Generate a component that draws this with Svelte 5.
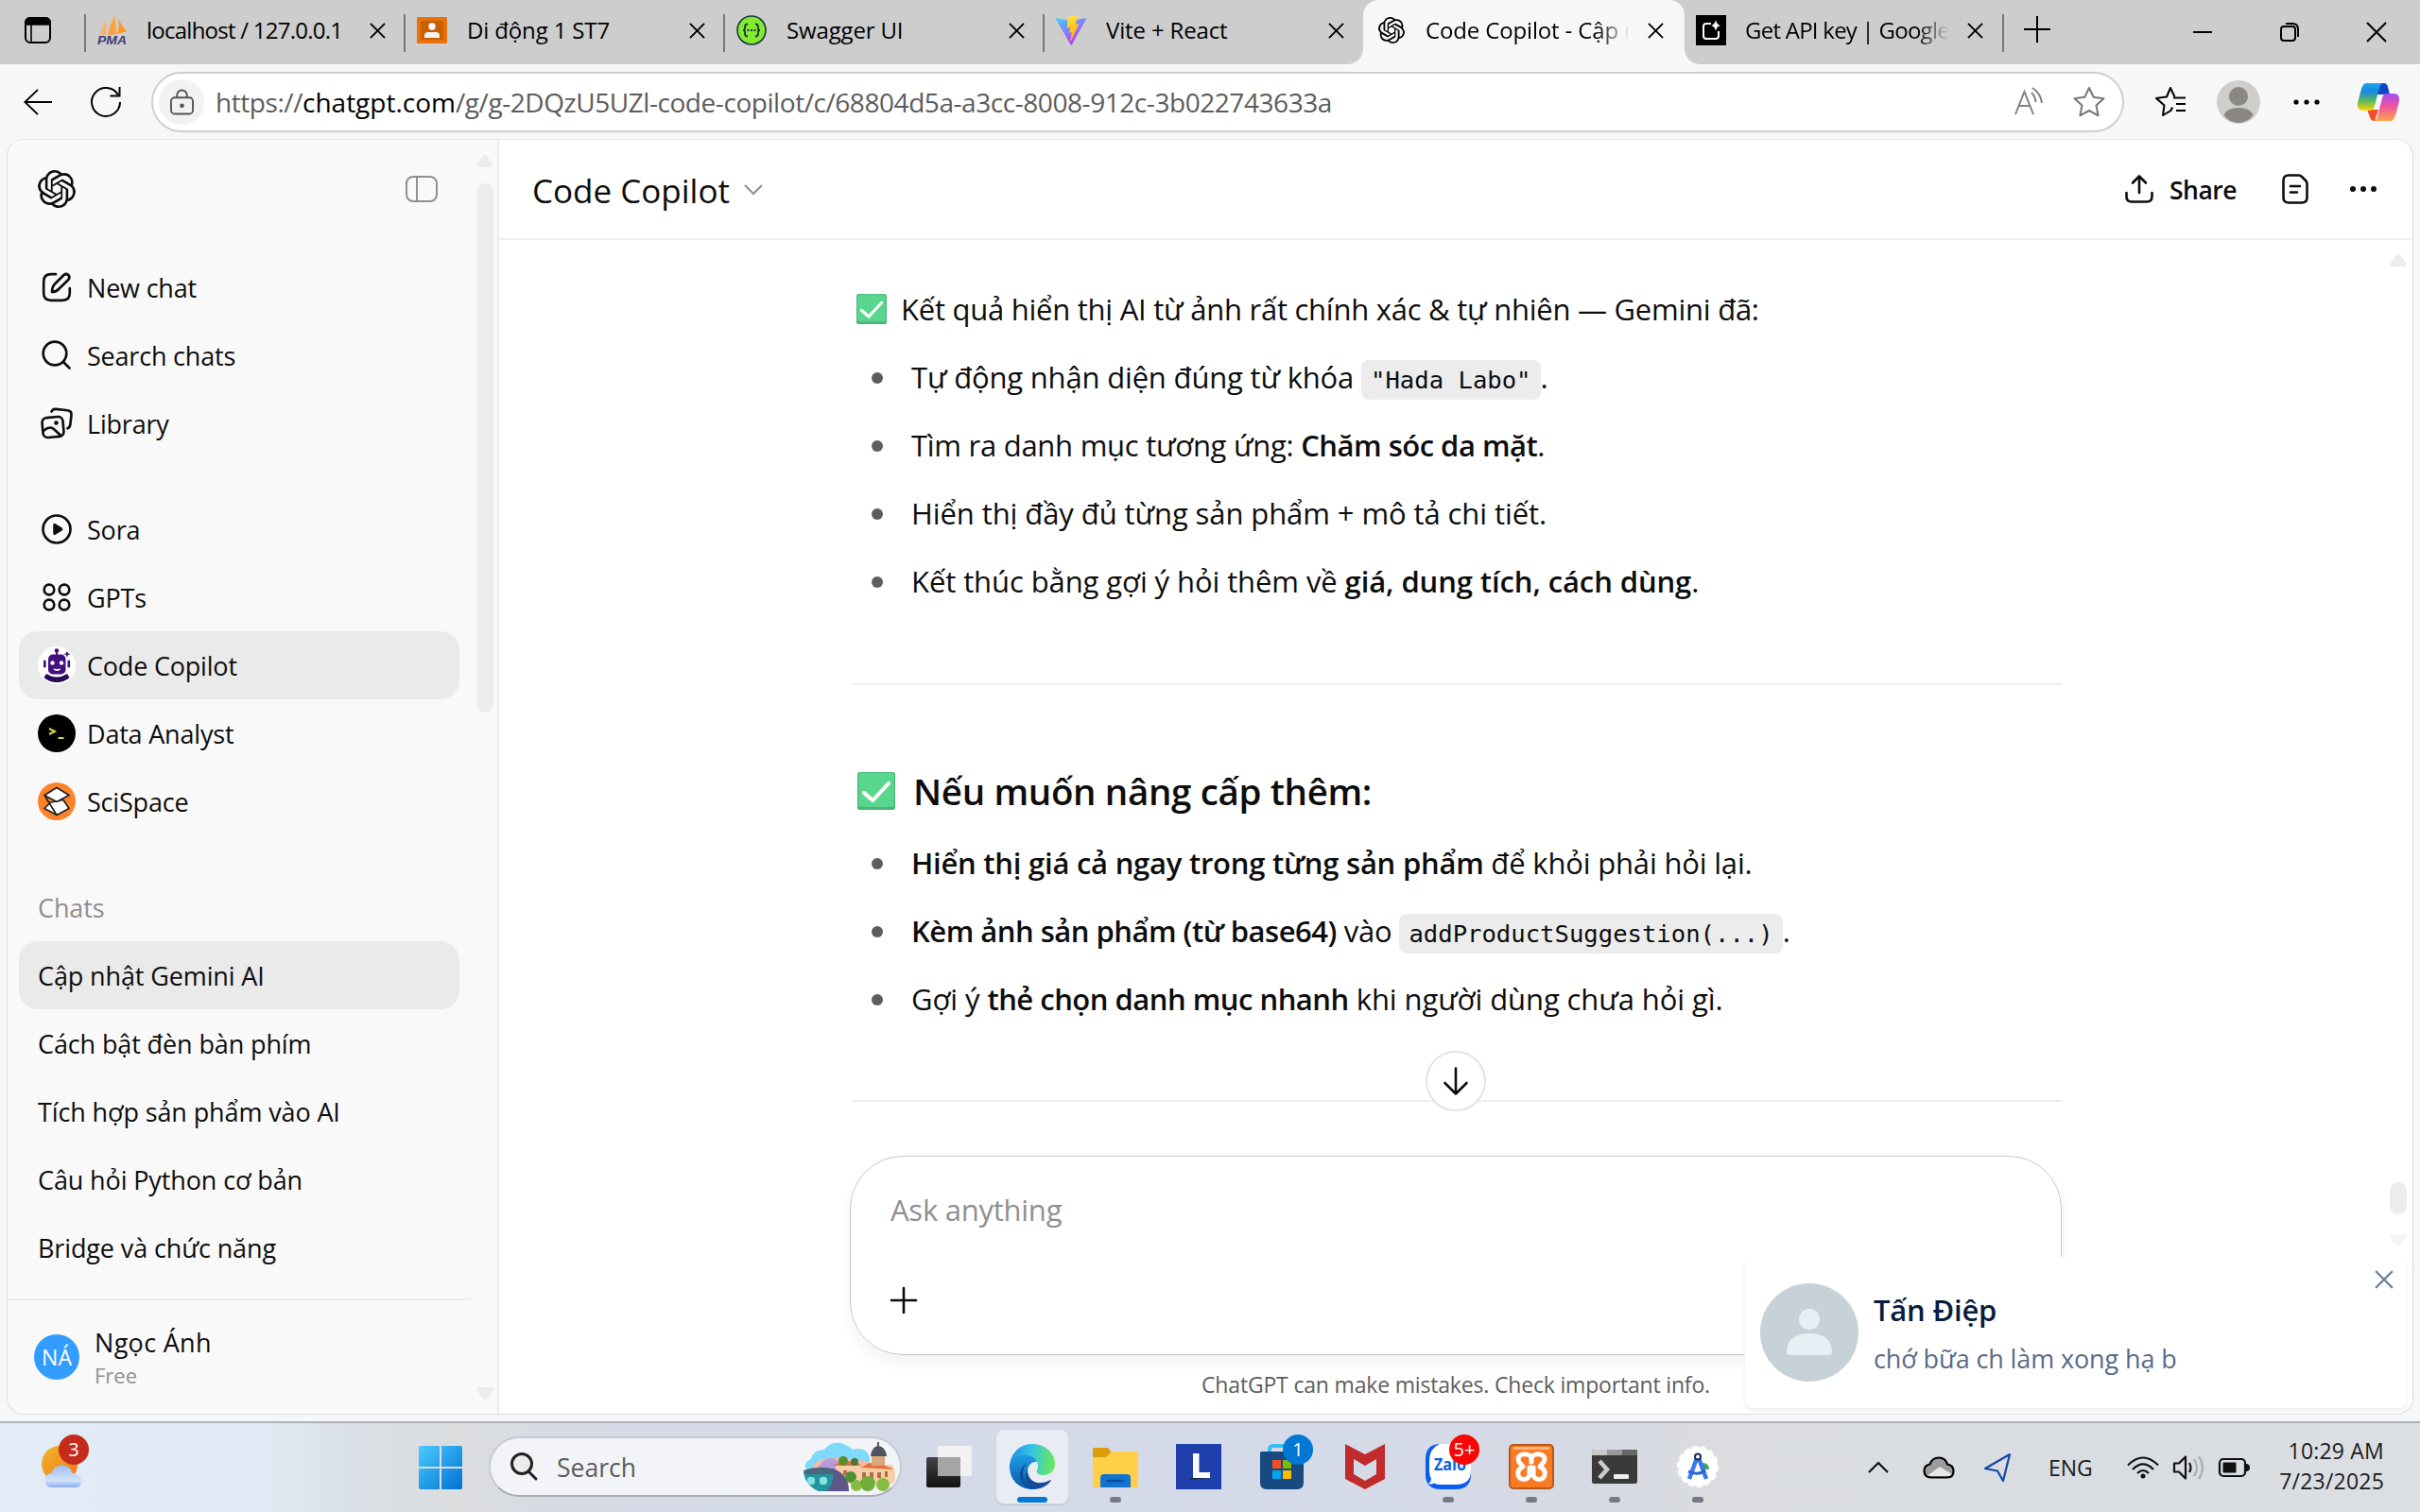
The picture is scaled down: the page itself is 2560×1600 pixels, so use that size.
<script>
  const tabs = [
    { icon: 'pma', title: 'localhost / 127.0.0.1', dense: true },
    { icon: 'class', title: 'Di động 1 ST7' },
    { icon: 'swagger', title: 'Swagger UI' },
    { icon: 'vite', title: 'Vite + React' },
    { icon: 'openai', title: 'Code Copilot - Cập nhật Gemini', active: true, faded: true },
    { icon: 'studio', title: 'Get API key | Google AI Studio', faded: true, dense: true },
  ];
  const tools = [
    { icon: 'edit', label: 'New chat' },
    { icon: 'search', label: 'Search chats' },
    { icon: 'library', label: 'Library' },
  ];
  const gpts = [
    { icon: 'sora', label: 'Sora' },
    { icon: 'gpts', label: 'GPTs' },
    { icon: 'robot', label: 'Code Copilot', active: true },
    { icon: 'analyst', label: 'Data Analyst' },
    { icon: 'scispace', label: 'SciSpace' },
  ];
  const chats = [
    'Cập nhật Gemini AI',
    'Cách bật đèn bàn phím',
    'Tích hợp sản phẩm vào AI',
    'Câu hỏi Python cơ bản',
    'Bridge và chức năng',
  ];
  const apps = [
    { icon: 'taskview' },
    { icon: 'edge', active: true },
    { icon: 'folder', running: true },
    { icon: 'lapp' },
    { icon: 'store', badge: '1' },
    { icon: 'mcafee' },
    { icon: 'zalo', running: true, badge: '5+', alert: true },
    { icon: 'xampp', running: true },
    { icon: 'terminal', running: true },
    { icon: 'android', running: true },
  ];
</script>

{#snippet openai()}
  <svg viewBox="0 0 24 24" fill="currentColor"><path d="M22.2819 9.8211a5.9847 5.9847 0 0 0-.5157-4.9108 6.0462 6.0462 0 0 0-6.5098-2.9A6.0651 6.0651 0 0 0 4.9807 4.1818a5.9847 5.9847 0 0 0-3.9977 2.9 6.0462 6.0462 0 0 0 .7427 7.0966 5.98 5.98 0 0 0 .511 4.9107 6.051 6.051 0 0 0 6.5146 2.9001A5.9847 5.9847 0 0 0 13.2599 24a6.0557 6.0557 0 0 0 5.7718-4.2058 5.9894 5.9894 0 0 0 3.9977-2.9001 6.0557 6.0557 0 0 0-.7475-7.0729zm-9.022 12.6081a4.4755 4.4755 0 0 1-2.8764-1.0408l.1419-.0804 4.7783-2.7582a.7948.7948 0 0 0 .3927-.6813v-6.7369l2.02 1.1686a.071.071 0 0 1 .038.052v5.5826a4.504 4.504 0 0 1-4.4945 4.4944zm-9.6607-4.1254a4.4708 4.4708 0 0 1-.5346-3.0137l.142.0852 4.783 2.7582a.7712.7712 0 0 0 .7806 0l5.8428-3.3685v2.3324a.0804.0804 0 0 1-.0332.0615L9.74 19.9502a4.4992 4.4992 0 0 1-6.1408-1.6464zM2.3408 7.8956a4.485 4.485 0 0 1 2.3655-1.9728V11.6a.7664.7664 0 0 0 .3879.6765l5.8144 3.3543-2.0201 1.1685a.0757.0757 0 0 1-.071 0l-4.8303-2.7865A4.504 4.504 0 0 1 2.3408 7.872zm16.5963 3.8558L13.1038 8.364 15.1192 7.2a.0757.0757 0 0 1 .071 0l4.8303 2.7913a4.4944 4.4944 0 0 1-.6765 8.1042v-5.6772a.79.79 0 0 0-.407-.667zm2.0107-3.0231l-.142-.0852-4.7735-2.7818a.7759.7759 0 0 0-.7854 0L9.409 9.2297V6.8974a.0662.0662 0 0 1 .0284-.0615l4.8303-2.7866a4.4992 4.4992 0 0 1 6.6802 4.66zM8.3065 12.863l-2.02-1.1638a.0804.0804 0 0 1-.038-.0567V6.0742a4.4992 4.4992 0 0 1 7.3757-3.4537l-.142.0805L8.704 5.459a.7948.7948 0 0 0-.3927.6813zm1.0976-2.3654l2.602-1.4998 2.6069 1.4998v2.9994l-2.5974 1.4997-2.6067-1.4997Z" /></svg>
{/snippet}

{#snippet cross()}
  <svg viewBox="0 0 18 18" fill="none" stroke="currentColor" stroke-width="2"><path d="M1 1l16 16M17 1L1 17" /></svg>
{/snippet}

{#snippet check()}
  <svg viewBox="0 0 32 32">
    <rect width="32" height="32" rx="2" fill="#4bb47b" />
    <rect x="1" y="0.5" width="30" height="29" rx="2" fill="#58d68d" />
    <path d="M5.500 17.500l7.500 6.500L26.500 9.500" fill="none" stroke="#fff" stroke-width="3.200" stroke-linecap="round" stroke-linejoin="round" />
  </svg>
{/snippet}

{#snippet favicon(name)}
  {#if name === 'pma'}
    <svg viewBox="0 0 32 32">
      <path d="M9 3Q10 12 9 21L2 20Q7 12 9 3z" fill="#fbb36b" />
      <path d="M19 0Q12 12 11 21L21 20Q18 9 19 0z" fill="#fba23c" />
      <path d="M22 4Q24 12 21 20L31 17Q25 10 22 4z" fill="#f89820" />
      <text x="0" y="31" class="pma" textLength="31" lengthAdjust="spacingAndGlyphs">PMA</text>
    </svg>
  {:else if name === 'class'}
    <svg viewBox="0 0 32 32">
      <rect y="2" width="32" height="28" rx="1" fill="#e8710a" />
      <rect x="4" y="6" width="24" height="20" fill="#c96104" />
      <circle cx="16" cy="12" r="3.700" fill="#fff" />
      <path d="M8 24v-2.500Q8 18 12 18h8q4 0 4 3.500V24z" fill="#f4f4f4" />
    </svg>
  {:else if name === 'swagger'}
    <svg viewBox="0 0 32 32" fill="none">
      <circle cx="16" cy="16" r="15" fill="#85ea2d" stroke="#173647" stroke-width="1.600" />
      <path d="M12 9.500q-3 0-3 3v1.500q0 2-2 2 2 0 2 2v1.500q0 3 3 3M20 9.500q3 0 3 3v1.500q0 2 2 2-2 0-2 2v1.500q0 3-3 3" stroke="#173647" stroke-width="1.800" />
      <path d="M11.500 16h2M15 16h2M18.500 16h2" stroke="#173647" stroke-width="2" />
    </svg>
  {:else if name === 'vite'}
    <svg viewBox="0 0 32 32">
      <defs>
        <linearGradient id="va" x1="0" y1="0" x2="0.600" y2="1"><stop stop-color="#41d1ff" /><stop offset="1" stop-color="#bd34fe" /></linearGradient>
        <linearGradient id="vb" x1="0.400" y1="0" x2="0.600" y2="1"><stop stop-color="#ffea83" /><stop offset="0.100" stop-color="#ffdd35" /><stop offset="1" stop-color="#ffa800" /></linearGradient>
      </defs>
      <path d="M31.700 4.400L16.900 31.300q-.7 1-1.400 0L.1 4.400q-.3-1.100 1-1.100L16 6l14.700-2.700q1.300 0 1 1.100z" fill="url(#va)" />
      <path d="M23 0L12.500 2l-.7 11.800 3.300-.7-1.100 5.600 2.600-.8-1.300 9.400q0 1 .7 0L24.500 9l-3.600.8z" fill="url(#vb)" />
    </svg>
  {:else if name === 'openai'}
    <span class="fav-openai">{@render openai()}</span>
  {:else}
    <svg viewBox="0 0 32 32" fill="none">
      <rect width="32" height="32" fill="#000" />
      <path d="M16 9h-5q-3 0-3 3v10q0 3 3 3h10q3 0 3-3v-5" stroke="#fff" stroke-width="2" />
      <path d="M21 5q.8 5 5 6-4.200 1-5 6-.8-5-5-6 4.200-1 5-6z" fill="#fff" />
    </svg>
  {/if}
{/snippet}

{#snippet navicon(name)}
  {#if name === 'edit'}
    <svg viewBox="0 0 40 40" class="line"><path d="M19 6.200h-5q-7.800 0-7.800 7.800v12q0 7.800 7.800 7.800h12q7.800 0 7.800-7.800v-5" /><path d="M15 25q0-5 2.500-8L27.500 7q2.500-2 4.800 0 2.300 2.500 0 5L22 22q-2.500 2.800-7 3z" /></svg>
  {:else if name === 'search'}
    <svg viewBox="0 0 40 40" class="line"><circle cx="18" cy="18" r="12.300" /><path d="M27 27l6.500 6.500" /></svg>
  {:else if name === 'library'}
    <svg viewBox="0 0 40 40" class="line"><path d="M14.500 7.500q1.500-3 4.500-2.600l12.500 1.400q4.500.7 4 5l-1.200 10q-.4 3-2.800 4" /><rect x="5" y="13.500" width="22" height="21" rx="5" transform="rotate(-5 16 24)" /><path d="M6.500 27.500q7-6 12 0l6 5.500" /><circle cx="19.500" cy="19.500" r="2.300" fill="#0d0d0d" stroke="none" /></svg>
  {:else if name === 'sora'}
    <svg viewBox="0 0 40 40" class="line"><circle cx="20" cy="20" r="14.500" /><path d="M17 15.500v9q.1 1.300 1.200.7l7-4.400q.9-.8 0-1.600l-7-4.400q-1.100-.6-1.200.7z" fill="#0d0d0d" stroke-width="1.500" /></svg>
  {:else if name === 'gpts'}
    <svg viewBox="0 0 40 40" class="line"><circle cx="12" cy="12" r="5.300" /><circle cx="28" cy="12" r="5.300" /><circle cx="12" cy="28" r="5.300" /><circle cx="28" cy="28" r="5.300" /></svg>
  {:else if name === 'robot'}
    <svg viewBox="0 0 40 40">
      <circle cx="20" cy="20" r="20" fill="#fff" />
      <g fill="#42107f">
        <circle cx="20" cy="4.500" r="2.300" /><rect x="19" y="5" width="2" height="4" />
        <rect x="11" y="8.500" width="18.500" height="21" rx="5" />
        <rect x="6" y="14.500" width="2.600" height="8" rx="1.300" /><rect x="31.500" y="14.500" width="2.600" height="8" rx="1.300" />
        <path d="M31 5l1.100 2.300 2.500.9-2.500.9L31 11.500l-1.100-2.400-2.500-.9 2.500-.9z" />
        <path d="M9 29q11 7 22 0l2.500 4Q28 38 20 38T6.500 33z" fill="#2b0a57" />
      </g>
      <circle cx="15.500" cy="17.500" r="2.200" fill="#fff" /><circle cx="25" cy="17.500" r="2.200" fill="#fff" />
      <path d="M17 24q3.200 2 6.500 0" stroke="#fff" stroke-width="1.800" fill="none" />
    </svg>
  {:else if name === 'analyst'}
    <svg viewBox="0 0 40 40" fill="none"><circle cx="20" cy="20" r="20" fill="#000" /><path d="M12 15l6 3-6 3M21.500 25h6" stroke="#d8d83a" stroke-width="2" /></svg>
  {:else}
    <svg viewBox="0 0 40 40"><circle cx="20" cy="20" r="20" fill="#ff8129" /><path d="M7 27.500l6.500-6.500L27 18.500l6 9L20 34.500z" fill="#fff" stroke="#222" stroke-width="1.700" stroke-linejoin="round" /><path d="M7 13.500L20 34.500 M12 21.500L19 33" fill="none" stroke="#222" stroke-width="1.700" /><path d="M7 13.500L20 5.500l13 8-13 7z" fill="#fff" stroke="#222" stroke-width="1.700" stroke-linejoin="round" /></svg>
  {/if}
{/snippet}

{#snippet appicon(name)}
  {#if name === 'taskview'}
    <svg viewBox="0 0 48 48"><defs><linearGradient id="tv" x1="0" y1="0" x2="0" y2="1"><stop stop-color="#444" /><stop offset="1" stop-color="#111" /></linearGradient></defs><rect x="12" y="2" width="36" height="32" rx="2" fill="#f2f2f3" /><rect y="14" width="36" height="32" rx="2" fill="url(#tv)" /><rect x="12" y="14" width="24" height="20" fill="#a5a5a6" /></svg>
  {:else if name === 'edge'}
    <svg viewBox="0 0 48 48">
      <defs>
        <linearGradient id="ea" x1="0" y1="0.300" x2="1" y2="0.400"><stop stop-color="#1b8fe0" /><stop offset="0.450" stop-color="#35c1e8" /><stop offset="1" stop-color="#66eb5a" /></linearGradient>
        <linearGradient id="eb" x1="0" y1="0" x2="0" y2="1"><stop stop-color="#1d9be6" /><stop offset="1" stop-color="#0c59a4" /></linearGradient>
      </defs>
      <path d="M0 22C2 8 12 0 24 0c13 0 24 9 24 21 0 8-6 12-12 12-5 0-8-2-7-5 3-5 0-14-10-14C9 14 1 20 0 26z" fill="url(#ea)" />
      <path d="M0 24c1-9 10-12 17-12 6 0 10 3 12 7-3-1-10 2-10 10 0 8 6 13 14 13 5 0 8-2 11-4-4 6-11 10-19 10C10 48 0 38 0 24z" fill="url(#eb)" />
      <path d="M19 20c-8 6-7 25 10 28-14 1-21-12-17-21 2-4 4-6 7-7z" fill="#0d4f99" />
      <path d="M19 28c0 9 7 14 15 13 5 0 8-3 10-3-3 6-11 10-18 9-8-2-12-13-7-19z" fill="#124a96" />
    </svg>
  {:else if name === 'folder'}
    <svg viewBox="0 0 48 48"><path d="M0 6q0-2 2-2h14l4 5v7H0z" fill="#dd9d0b" /><path d="M0 14h14l6-6h26q2 0 2 2v34q0 2-2 2H2q-2 0-2-2z" fill="#ffcf48" /><path d="M8 46V36q0-4 4-4h24q4 0 4 4v10z" fill="#1274d0" /><path d="M15 39h18" stroke="#0a4d98" stroke-width="2.500" /></svg>
  {:else if name === 'lapp'}
    <svg viewBox="0 0 48 48"><rect width="48" height="48" fill="#1f3fad" /><path d="M13 38l5-3 17 1z" fill="#0f2a3f" /><path d="M18 10h6.500v20H36v6H18z" fill="#fff" /></svg>
  {:else if name === 'store'}
    <svg viewBox="0 0 48 48"><path d="M11 12V6q0-4 4-4h18q4 0 4 4v6" fill="none" stroke="#35bff0" stroke-width="4" /><path d="M1 10q0-2 2-2h42q2 0 2 2v31q0 7-7 7H8q-7 0-7-7z" fill="#164a80" /><rect x="14" y="17" width="9" height="9" fill="#f25022" /><rect x="25" y="17" width="9" height="9" fill="#7fba00" /><rect x="14" y="28" width="9" height="9" fill="#00a4ef" /><rect x="25" y="28" width="9" height="9" fill="#ffb900" /></svg>
  {:else if name === 'mcafee'}
    <svg viewBox="0 0 48 48"><path d="M3 0l21 11L45 0v37L24 48 3 37zM12 16v16l12 7 12-7V16l-12 7z" fill="#c02c2c" fill-rule="evenodd" /></svg>
  {:else if name === 'zalo'}
    <svg viewBox="0 0 48 48"><path d="M0 16Q0 0 16 0h16q16 0 16 16v16q0 16-16 16H16Q0 48 0 32z" fill="#0b5cf0" /><path d="M15 0h17q16 0 16 16v12q0 15-16 15H16q-4 0-7-1.500-3 1.500-6 .5 3-2 3-5-2-4-2-9V17Q4 5 15 0z" fill="#fff" /><text x="9" y="28" class="zalo" textLength="34" lengthAdjust="spacingAndGlyphs">Zalo</text></svg>
  {:else if name === 'xampp'}
    <svg viewBox="0 0 48 48"><rect x="1" y="1" width="46" height="46" rx="4" fill="#fb7a24" stroke="#b9571b" stroke-width="2" /><path d="M5 3h38v3H5z" fill="#fdb27c" /><path d="M24 19v-3c0-7-14-7-14 0 0 4 3 5 5 8-4 2-6 5-5 9 1 6 12 6 12-1v-7h4v7c0 7 11 7 12 1 1-4-1-7-5-9 2-3 5-4 5-8 0-7-14-7-14 0" fill="none" stroke="#fff" stroke-width="5" stroke-linejoin="round" stroke-linecap="round" /></svg>
  {:else if name === 'terminal'}
    <svg viewBox="0 0 48 48"><path d="M0 8q0-2 2-2h44q2 0 2 2v32q0 2-2 2H2q-2 0-2-2z" fill="#3a3a3a" /><path d="M0 12V8q0-2 2-2h14v6z" fill="#c9c9c9" /><path d="M16 6h16v6H16z" fill="#999" /><path d="M32 6h14q2 0 2 2v4H32z" fill="#666" /><path d="M8 18l8 9-8 9" fill="none" stroke="#ccc" stroke-width="4.500" /><rect x="23" y="32" width="16" height="5" rx="1" fill="#eee" /></svg>
  {:else}
    <svg viewBox="0 0 48 48"><circle cx="24" cy="24" r="20.500" fill="#fff" stroke="#fff" stroke-width="3" stroke-dasharray="6 3" /><path d="M29 20q7 0 7 7h-8z" fill="#38a852" /><path d="M23 15l-8 22M25 15l8 22" stroke="#3b78f0" stroke-width="4.500" fill="none" /><path d="M14 29q10 5 18-1" stroke="#2e62d0" stroke-width="3" fill="none" /><circle cx="24" cy="13.500" r="3" fill="#fff" stroke="#17304d" stroke-width="2" /></svg>
  {/if}
{/snippet}

<div class="desktop">
  <header class="tabbar">
    <div class="workspaces">
      <svg viewBox="0 0 28 28"><rect x="1" y="1" width="26" height="26" rx="5" fill="none" stroke="#000" stroke-width="2" /><path d="M1 8V6q0-5 5-5h16q5 0 5 5v2zM7 8v18" stroke="#000" stroke-width="1.600" /></svg>
    </div>
    {#each tabs as tab}
      <div class="tab" class:active={tab.active}>
        <span class="favicon">{@render favicon(tab.icon)}</span>
        <span class="tab-title" class:faded={tab.faded} class:dense={tab.dense}>{tab.title}</span>
        <span class="tab-close">{@render cross()}</span>
      </div>
    {/each}
    <div class="newtab"><svg viewBox="0 0 28 28" fill="none" stroke="#000" stroke-width="2"><path d="M14 0v28M0 14h28" /></svg></div>
    <div class="window-controls">
      <svg viewBox="0 0 20 20"><path d="M0 10h20" /></svg>
      <svg viewBox="0 0 20 20"><rect x="1" y="4" width="15" height="15" rx="3" /><path d="M6 1h7q6 0 6 6v8" /></svg>
      <svg viewBox="0 0 20 20"><path d="M0 0l20 20M20 0L0 20" /></svg>
    </div>
  </header>

  <div class="toolbar">
    <svg class="back" viewBox="0 0 32 32" fill="none" stroke="#000" stroke-width="2"><path d="M32 16H1M16 2L1.500 16 16 30" /></svg>
    <svg class="reload" viewBox="0 0 34 34" fill="none" stroke="#000" stroke-width="2"><path d="M30 9.500A15 15 0 1 0 32 17" /><path d="M31.500 1v9.500H21.500" /></svg>
    <div class="address">
      <span class="lock"><svg viewBox="0 0 26 28" fill="none" stroke="#555" stroke-width="2"><rect x="1" y="9" width="24" height="18" rx="4" /><path d="M7.500 9V6.500a5.500 5.500 0 0 1 11 0V9" /><circle cx="13" cy="18" r="1.500" fill="#555" /></svg></span>
      <span class="url">https://<b>chatgpt.com</b>/g/g-2DQzU5UZl-code-copilot/c/68804d5a-a3cc-8008-912c-3b022743633a</span>
      <svg class="aloud" viewBox="0 0 32 32"><path d="M1 29L10.500 5 20 29M4.500 20h12M18 6q4 4 4.500 10M19 1q9 6 10 16" /></svg>
      <svg class="star" viewBox="0 0 34 34"><path d="M17 2l4.700 9.800 10.800 1.400-8 7.400 2.100 10.700L17 26l-9.600 5.300 2.100-10.700-8-7.400 10.800-1.400z" /></svg>
    </div>
    <svg class="favs" viewBox="0 0 34 34" fill="none" stroke="#000" stroke-width="2"><path d="M19 22.500l-1.500 3.500-8.500 5 1.500-10.500-8.500-7.500 11-1.500 4-9.500 4.500 9.500" stroke-linejoin="round" /><path d="M20 12.500h13M23 19h10M23 26h10" /></svg>
    <svg class="account" viewBox="0 0 46 46"><circle cx="23" cy="23" r="23" fill="#d0cecb" /><circle cx="23" cy="17" r="10" fill="#8b8783" /><path d="M7.500 37q3-8 15.500-8t15.500 8Q32 45 23 45T7.500 37z" fill="#8b8783" /></svg>
    <svg class="more" viewBox="0 0 28 6" fill="#000"><circle cx="3" cy="3" r="2.600" /><circle cx="14" cy="3" r="2.600" /><circle cx="25" cy="3" r="2.600" /></svg>
    <svg class="copilot" viewBox="0 0 44 40">
      <defs>
        <linearGradient id="ca" x1="0" y1="0" x2="0" y2="1"><stop stop-color="#1fa8e8" /><stop offset="0.300" stop-color="#1488e0" /><stop offset="0.650" stop-color="#5cb85c" /><stop offset="1" stop-color="#ffd400" /></linearGradient>
        <linearGradient id="cb" x1="0" y1="0" x2="0" y2="1"><stop stop-color="#a84cf0" /><stop offset="0.500" stop-color="#f0589a" /><stop offset="1" stop-color="#ffa64a" /></linearGradient>
      </defs>
      <path d="M20 0h8q3 0 4 4l2 8H20z" fill="#1246c8" /><path d="M10 28h12l-4 12q-4 0-5-4z" fill="#ee4d2e" />
      <path d="M9 0h18q-3 1-4 5l-5 19q-1 5-5 5H6q-7 0-6-8L4 6q2-6 5-6z" fill="url(#ca)" />
      <path d="M35 40H17q3-1 4-5l5-19q1-5 5-5h7q7 0 6 8l-4 15q-2 6-5 6z" fill="url(#cb)" />
    </svg>
  </div>

  <div class="page">
    <aside class="sidebar">
      <div class="side-main">
        <div class="side-head">
          <span class="logo">{@render openai()}</span>
          <svg class="toggle" viewBox="0 0 34 28"><rect x="1" y="1" width="32" height="26" rx="7" /><path d="M12 1v26" /></svg>
        </div>
        <nav class="group">
          {#each tools as item}
            <div class="item"><span class="nav-icon">{@render navicon(item.icon)}</span><span>{item.label}</span></div>
          {/each}
        </nav>
        <nav class="group">
          {#each gpts as item}
            <div class="item" class:selected={item.active}><span class="nav-icon">{@render navicon(item.icon)}</span><span>{item.label}</span></div>
          {/each}
        </nav>
        <div class="group chats">
          <div class="item muted">Chats</div>
          {#each chats as chat, i}
            <div class="item" class:selected={i === 0}><span>{chat}</span></div>
          {/each}
        </div>
        <div class="profile">
          <span class="avatar">NÁ</span>
          <div class="who"><span class="name">Ngọc Ánh</span><span class="plan">Free</span></div>
        </div>
      </div>
      <div class="scrollbar side-scroll">
        <svg viewBox="0 0 18 14"><path d="M9 0q1.500 0 2.500 1.500L17 9q2 4-1 4H2q-3 0-1-4l5.500-7.500Q7.500 0 9 0z" /></svg>
        <div class="thumb"></div>
        <svg class="end" viewBox="0 0 18 14"><path d="M9 14q-1.500 0-2.500-1.500L1 5q-2-4 1-4h14q3 0 1 4l-5.500 7.500Q10.500 14 9 14z" /></svg>
      </div>
    </aside>

    <main class="main">
      <div class="chat-head">
        <span class="model">Code Copilot</span>
        <svg class="caret" viewBox="0 0 20 12" fill="none" stroke="#8f8f8f" stroke-width="2"><path d="M1 1l9 9 9-9" /></svg>
        <div class="actions">
          <svg class="share-icon" viewBox="0 0 30 30" fill="none" stroke="#0d0d0d" stroke-width="2.600" stroke-linecap="round" stroke-linejoin="round"><path d="M15 19V2M8 8.500L15 1.500l7 7M1.500 19v4q0 5.500 5.500 5.500h16q5.500 0 5.500-5.500v-4" /></svg>
          <span class="share">Share</span>
          <svg class="doc" viewBox="0 0 28 32" fill="none" stroke="#0d0d0d" stroke-width="2.600" stroke-linecap="round"><path d="M7 1.500h10.500q2 0 3.500 1.500l4 4q1.500 1.500 1.500 3.500V25q0 5.500-5.500 5.500H7Q1.500 30.500 1.500 25V7Q1.500 1.500 7 1.500zM9 13h10M9 19.500h7" /></svg>
          <svg class="dots" viewBox="0 0 28 6" fill="#0d0d0d"><circle cx="3" cy="3" r="3" /><circle cx="14" cy="3" r="3" /><circle cx="25" cy="3" r="3" /></svg>
        </div>
      </div>
      <div class="thread">
        <div class="column">
          <p class="lead"><span class="emoji">{@render check()}</span>Kết quả hiển thị AI từ ảnh rất chính xác &amp; tự nhiên — Gemini đã:</p>
          <ul>
            <li>Tự động nhận diện đúng từ khóa <code>"Hada Labo"</code>.</li>
            <li class="snug">Tìm ra danh mục tương ứng: <strong>Chăm sóc da mặt</strong>.</li>
            <li class="open">Hiển thị đầy đủ từng sản phẩm + mô tả chi tiết.</li>
            <li class="open">Kết thúc bằng gợi ý hỏi thêm về <strong class="open">giá, dung tích, cách dùng</strong>.</li>
          </ul>
          <hr />
          <h3><span class="emoji">{@render check()}</span>Nếu muốn nâng cấp thêm:</h3>
          <ul class="second">
            <li><strong class="loose">Hiển thị giá cả ngay trong từng sản phẩm</strong> để khỏi phải hỏi lại.</li>
            <li><strong>Kèm ảnh sản phẩm (từ base64)</strong> vào <code>addProductSuggestion(...)</code>.</li>
            <li class="open">Gợi ý <strong>thẻ chọn danh mục nhanh</strong> khi người dùng chưa hỏi gì.</li>
          </ul>
          <div class="rule">
            <span class="jump"><svg viewBox="0 0 26 30" fill="none" stroke="#0d0d0d" stroke-width="2.600" stroke-linecap="round" stroke-linejoin="round"><path d="M13 1.500v27M1.500 17L13 28.500 24.500 17" /></svg></span>
          </div>
          <div class="composer">
            <span class="placeholder">Ask anything</span>
            <svg class="plus" viewBox="0 0 28 28" fill="none" stroke="#0d0d0d" stroke-width="2.600" stroke-linecap="round"><path d="M14 1v26M1 14h26" /></svg>
          </div>
          <p class="disclaimer">ChatGPT can make mistakes. Check important info.</p>
        </div>
        <div class="scrollbar main-scroll">
          <svg viewBox="0 0 18 14"><path d="M9 0q1.500 0 2.500 1.500L17 9q2 4-1 4H2q-3 0-1-4l5.500-7.500Q7.500 0 9 0z" /></svg>
          <div class="thumb"></div>
          <svg class="faint" viewBox="0 0 18 14"><path d="M9 14q-1.500 0-2.500-1.500L1 5q-2-4 1-4h14q3 0 1 4l-5.500 7.500Q10.500 14 9 14z" /></svg>
        </div>
      </div>
    </main>
  </div>

  <div class="toast">
    <svg class="face" viewBox="0 0 104 104"><circle cx="52" cy="52" r="52" fill="#c6d2d8" /><circle cx="52" cy="38" r="11" fill="#e6eff3" /><path d="M28 71q2-18 24-18t24 18q1 5-4 5H32q-5 0-4-5z" fill="#e6eff3" /></svg>
    <div class="message"><span class="sender">Tấn Điệp</span><span class="body">chớ bữa ch làm xong hạ b</span></div>
    <span class="dismiss">{@render cross()}</span>
  </div>

  <footer class="taskbar">
    <div class="weather">
      <svg viewBox="0 0 48 48">
        <defs><linearGradient id="wa" x1="0" y1="0" x2="1" y2="1"><stop stop-color="#f0b429" /><stop offset="1" stop-color="#f07a18" /></linearGradient><linearGradient id="wb" x1="0" y1="0" x2="0" y2="1"><stop stop-color="#9cbcf2" /><stop offset="0.700" stop-color="#d3e3fb" /><stop offset="1" stop-color="#86abee" /></linearGradient></defs>
        <circle cx="20" cy="20" r="20" fill="url(#wa)" /><path d="M12 46q-8 0-8-8 0-7 7-8 2-8 12-9 9 1 11 9 10 1 10 9 0 7-8 7z" fill="url(#wb)" />
      </svg>
      <span class="badge red">3</span>
    </div>
    <svg class="start" viewBox="0 0 46 46"><defs><linearGradient id="wi" gradientUnits="userSpaceOnUse" x1="0" y1="0" x2="46" y2="46"><stop stop-color="#4ccbff" /><stop offset="1" stop-color="#0070d0" /></linearGradient></defs><path d="M2 0h20v22H0V2q0-2 2-2zM24 0h20q2 0 2 2v20H24zM0 24h22v22H2q-2 0-2-2zM24 24h22v20q0 2-2 2H24z" fill="url(#wi)" /></svg>
    <div class="search">
      <svg class="glass" viewBox="0 0 30 30" fill="none" stroke="#222" stroke-width="3"><circle cx="13" cy="12" r="10.500" fill="#ececee" /><path d="M20 20l8 8" stroke-linecap="round" /></svg>
      <span>Search</span>
      <svg class="scene" viewBox="0 0 98 52">
        <path d="M4 32Q-2 22 8 18q2-10 14-10 8-10 20-6 6 2 10 6 14-4 18 8v24H4z" fill="#7fd9fb" />
        <path d="M8 34Q8 18 28 17q24 0 42 4v20H8z" fill="#f3b9a9" />
        <path d="M16 26q10-14 20-6l8 12H12z" fill="#b79ad8" />
        <path d="M34 24h60q3 6 3 12t-3 8H34z" fill="#f6cfa8" />
        <path d="M32 25l8-6 14 2 8 4zM60 27l10-5 14 2 12 5z" fill="#e5713f" />
        <path d="M72 25V15h14v10z" fill="#d9a77c" /><path d="M71 15q1-10 8-11 8 1 9 11z" fill="#4f5260" /><path d="M79 5V0" stroke="#4f5260" stroke-width="2" />
        <path d="M42 30h4v5h-4zM62 32h4v6h-4zM70 32h4v6h-4zM78 32h4v6h-4zM86 31h3v6h-3z" fill="#b56b48" />
        <path d="M0 32q10-6 30-4l4 24H16Q2 46 0 32z" fill="#24949c" /><path d="M0 30q16-6 34-1v5H1z" fill="#4c6680" />
        <rect x="4" y="37" width="8" height="8" rx="3" fill="#83e3e0" /><rect x="17" y="37" width="8" height="8" rx="3" fill="#83e3e0" />
        <path d="M30 28q10 2 16 12 2 6 2 12H24q10-8 6-24z" fill="#5d5687" />
        <circle cx="42" cy="20" r="5" fill="#5a8d2c" /><circle cx="50" cy="37" r="6" fill="#4f8f35" /><circle cx="56" cy="46" r="6" fill="#86bd3f" /><circle cx="68" cy="44" r="8" fill="#6fae38" /><circle cx="84" cy="45" r="7" fill="#86bd3f" /><circle cx="54" cy="21" r="4" fill="#447a39" />
      </svg>
    </div>
    <div class="apps">
      {#each apps as app}
        <div class="app" class:focused={app.active}>
          <span class="app-icon">{@render appicon(app.icon)}</span>
          {#if app.badge}<span class="badge" class:alert={app.alert}>{app.badge}</span>{/if}
          {#if app.active}<span class="mark wide"></span>{:else if app.running}<span class="mark"></span>{/if}
        </div>
      {/each}
    </div>
    <div class="tray">
      <svg class="up" viewBox="0 0 22 12" fill="none" stroke="#111" stroke-width="2.200"><path d="M1 11L11 1l10 10" /></svg>
      <svg class="cloud" viewBox="0 0 34 24"><path d="M9 22.500q-7.500 0-7.500-7 0-6 6-7Q10 1.500 17 1.500t9 7q6.500 1 6.500 7 0 7-6.500 7z" fill="#9b9b9b" stroke="#000" stroke-width="2.200" /><path d="M5 20.500L18 11l13 8-3 2H7z" fill="#e6e6e6" /></svg>
      <svg class="loc" viewBox="0 0 30 32" fill="none" stroke="#1049a8" stroke-width="2.200" stroke-linejoin="round"><path d="M28 2L2 17l13 2.500L21 30z" /></svg>
      <span class="lang">ENG</span>
      <svg class="wifi" viewBox="0 0 34 24" fill="none" stroke="#111" stroke-width="2.200"><path d="M1 9.500q16-16 32 0M6 14q11-11 22 0M11 18q6-6 12 0" /><circle cx="17" cy="21" r="2.500" fill="#111" stroke="none" /></svg>
      <svg class="vol" viewBox="0 0 34 28" fill="none" stroke="#111" stroke-width="2.200"><path d="M1 9.500h5l7-7v23l-7-7H1z" stroke-linejoin="round" /><path d="M17 9q3 5 0 10" /><path d="M22 5q6 9 0 18M27 2q8 12 0 24" stroke="#aaadb3" /></svg>
      <svg class="bat" viewBox="0 0 34 22"><rect x="1" y="2" width="27" height="18" rx="4" fill="none" stroke="#111" stroke-width="2.200" /><rect x="4.500" y="5.500" width="14" height="11" rx="1" fill="#111" /><path d="M29 7q4 0 4 4t-4 4z" fill="#111" /></svg>
      <div class="clock"><span>10:29 AM</span><span>7/23/2025</span></div>
    </div>
  </footer>
</div>

<style>
  :global(body) { margin: 0; }
  .desktop {
    position: relative;
    width: 2560px;
    height: 1600px;
    overflow: hidden;
    display: flex;
    flex-direction: column;
    background: #f7f7f7;
    color: #0d0d0d;
    font-family: "Open Sans", "Noto Sans", sans-serif;
    font-size: 27px;
    white-space: nowrap;
  }
  .desktop * { box-sizing: border-box; }
  svg { display: block; flex: none; overflow: visible; }
  p, ul, h3 { margin: 0; padding: 0; }

  /* Tab strip */
  .tabbar { display: flex; height: 68px; flex: none; background: #cdcdcd; color: #000; }
  .workspaces { width: 90px; padding: 18px 0 0 26px; }
  .workspaces svg { width: 28px; height: 28px; }
  .tab { position: relative; display: flex; align-items: center; width: 338px; height: 68px; padding: 0 20px 4px 13px; }
  .tab::before { content: ""; position: absolute; left: -1px; top: 15px; width: 2px; height: 40px; background: #777; }
  .tab.active { background: #f7f7f7; border-radius: 16px 16px 0 0; width: 340px; padding: 0 22px 4px 14px; }
  .tab.active::before {
    left: -16px; top: auto; bottom: 0; width: 372px; height: 16px;
    background:
      radial-gradient(circle at 0 0, transparent 15.5px, #f7f7f7 16px) left / 16px 16px no-repeat,
      radial-gradient(circle at 100% 0, transparent 15.5px, #f7f7f7 16px) right / 16px 16px no-repeat;
  }
  .tab.active + .tab { padding: 0 22px 4px 12px; }
  .tab.active + .tab::before { display: none; }
  .favicon { width: 32px; height: 32px; display: grid; place-items: center; }
  .favicon svg { width: 32px; height: 32px; }
  .fav-openai svg { width: 28px; height: 28px; }
  .tab-title { width: 216px; margin-left: 21px; overflow: hidden; font-size: 24px; line-height: 36px; letter-spacing: -0.15px; }
  .tab-title.faded { margin-left: 20px; mask-image: linear-gradient(90deg, #000 84%, transparent); }
  .tab-title.dense { margin-left: 20px; letter-spacing: -0.75px; }
  .tab-close { margin-left: auto; }
  .tab-close svg { width: 17px; height: 17px; }
  .newtab { position: relative; padding: 17px 0 0 21px; width: 190px; }
  .newtab::before { content: ""; position: absolute; left: -2px; top: 15px; width: 2px; height: 40px; background: #777; }
  .newtab svg { width: 28px; height: 28px; }
  .window-controls { display: flex; gap: 72px; padding: 24px 36px 0 0; margin-left: auto; }
  .window-controls svg { width: 20px; height: 20px; fill: none; stroke: #000; stroke-width: 2; }

  /* Address bar */
  .toolbar { display: flex; align-items: center; height: 80px; flex: none; padding: 0 22px 0 24px; }
  .back { width: 32px; height: 30px; }
  .reload { width: 34px; height: 34px; margin-left: 39px; }
  .address { display: flex; align-items: center; width: 2087px; height: 64px; margin-left: 31px; padding: 0 18px 0 6px; border: 2px solid #cfcfcf; border-radius: 32px; background: #fff; }
  .lock { display: grid; place-items: center; width: 48px; height: 48px; border-radius: 50%; background: #f2f2f2; }
  .lock svg { width: 25px; height: 28px; }
  .url { margin-left: 12px; font-size: 28px; color: #5c5c5c; letter-spacing: -0.44px; }
  .url b { font-weight: 400; color: #000; letter-spacing: 0; }
  .aloud { width: 32px; height: 32px; margin-left: auto; fill: none; stroke: #808080; stroke-width: 2; }
  .star { width: 34px; height: 34px; margin-left: 30px; fill: none; stroke: #777; stroke-width: 2; stroke-linejoin: round; }
  .favs { width: 34px; height: 34px; margin-left: 32px; }
  .account { width: 46px; height: 46px; margin-left: 32px; }
  .more { width: 28px; height: 6px; margin-left: 35px; }
  .copilot { width: 44px; height: 40px; margin-left: auto; }

  /* Page frame */
  .page { display: flex; width: 2546px; height: 1350px; margin: -1px 0 7px 7px; flex: none; overflow: hidden; border: 1px solid #dcdcdc; border-top-color: #e8e8e8; border-radius: 18px; background: #fff; }
  .sidebar { display: flex; width: 520px; border-right: 2px solid #ececec; background: #f9f9f9; }
  .side-main { display: flex; flex-direction: column; width: 490px; }
  .side-head { display: flex; align-items: center; justify-content: space-between; height: 104px; flex: none; padding: 0 35px 0 32px; }
  .logo svg { width: 40px; height: 40px; }
  .toggle { width: 34px; height: 28px; fill: none; stroke: #8f8f8f; stroke-width: 2; }
  .group { flex: none; padding: 16px 12px 24px; }
  .item { display: flex; align-items: center; gap: 12px; height: 72px; padding: 0 20px; border-radius: 20px; letter-spacing: -0.2px; }
  .item > span:last-child { padding-top: 1px; }
  .selected { background: #eaeaea; }
  .nav-icon svg { width: 40px; height: 40px; }
  .line { fill: none; stroke: #0d0d0d; stroke-width: 2.660px; stroke-linecap: round; stroke-linejoin: round; }
  .muted { color: #8f8f8f; }
  .chats { flex: 1; padding-bottom: 0; }
  .chats .item { letter-spacing: -0.12px; }
  .profile { display: flex; align-items: center; gap: 16px; height: 122px; flex: none; padding: 0 28px; border-top: 2px solid #ececec; }
  .avatar { display: grid; place-items: center; width: 48px; height: 48px; border-radius: 50%; background: #339cff; color: #fff; font-size: 23px; }
  .who { display: flex; flex-direction: column; padding-top: 2px; }
  .name { line-height: 36px; letter-spacing: 0.3px; }
  .plan { font-size: 22px; line-height: 32px; color: #8f8f8f; }
  .scrollbar { display: flex; flex-direction: column; fill: #ececec; }
  .scrollbar svg { width: 18px; height: 14px; }
  .thumb { width: 18px; border-radius: 9px; background: #ececec; }
  .side-scroll { padding: 16px 0 15px 6px; }
  .side-scroll .thumb { height: 560px; margin-top: 16px; }
  .end { margin-top: auto; }

  /* Conversation */
  .main { display: flex; flex-direction: column; flex: 1; }
  .chat-head { display: flex; align-items: center; height: 106px; padding: 0 38px 0 35px; border-bottom: 2px solid #f0f0f0; }
  .model { margin-top: 2px; font-size: 35px; }
  .caret { width: 20px; height: 12px; margin: 2px 0 0 15px; }
  .actions { display: flex; align-items: center; margin-left: auto; }
  .share-icon { width: 30px; height: 30px; }
  .share { margin: 2px 0 0 17px; font-size: 26.500px; letter-spacing: -0.500px; font-weight: 600; }
  .doc { width: 28px; height: 32px; margin-left: 48px; }
  .dots { width: 28px; height: 6px; margin-left: 44px; }
  .thread { display: flex; justify-content: space-between; flex: 1; padding: 0 6px 0 374px; }
  .column { width: 1280px; font-size: 31px; letter-spacing: -0.18px; }
  .lead { display: flex; align-items: center; height: 56px; margin-top: 45px; letter-spacing: -0.25px; }
  .emoji { display: inline-flex; }
  .lead .emoji { margin: 0 15px 0 4px; }
  .lead .emoji svg { width: 32px; height: 32px; }
  ul { list-style: none; padding-top: 16px; }
  li { position: relative; height: 56px; margin-bottom: 16px; padding-left: 62px; line-height: 56px; }
  li::before { content: ""; position: absolute; left: 20px; top: 23px; width: 12px; height: 12px; border-radius: 50%; background: #5d5d5d; }
  li.open { letter-spacing: -0.09px; }
  li.snug { letter-spacing: -0.27px; }
  strong { font-weight: 600; letter-spacing: -0.5px; }
  strong.loose { letter-spacing: -0.24px; }
  strong.open { letter-spacing: -0.1px; }
  code { display: inline-block; padding: 0 10px; border-radius: 8px; background: #ececec; font-family: "DejaVu Sans Mono", monospace; font-size: 25.600px; line-height: 42px; letter-spacing: 0; }
  hr { height: 2px; margin: 80px 0 0; border: 0; background: #ececec; }
  h3 { display: flex; align-items: center; height: 64px; margin-top: 80px; font-size: 38.500px; font-weight: 600; letter-spacing: -0.35px; }
  h3 .emoji { margin: 0 19px 0 5px; }
  h3 .emoji svg { width: 40px; height: 40px; }
  .second { padding-top: 16px; }
  .rule { position: relative; height: 2px; margin-top: 79px; background: #ececec; }
  .jump { position: absolute; left: 606px; top: -52px; display: grid; place-items: center; width: 64px; height: 64px; border: 2px solid #e3e3e3; border-radius: 50%; background: #fff; }
  .jump svg { width: 26px; height: 30px; }
  .composer { display: flex; flex-direction: column; justify-content: space-between; align-items: flex-start; width: 1282px; height: 211px; margin: 57px 0 0 -3px; padding: 33px 42px 43px; border: 1.500px solid #c9c9c9; border-radius: 56px; box-shadow: 0 8px 16px rgba(0, 0, 0, 0.05); }
  .placeholder { color: #8f8f8f; line-height: 46px; letter-spacing: -0.25px; }
  .plus { width: 28px; height: 28px; }
  .disclaimer { margin: 14px 4px 0 0; font-size: 23px; line-height: 34px; letter-spacing: -0.18px; text-align: center; color: #5d5d5d; }
  .main-scroll { padding-top: 15px; }
  .main-scroll .thumb { height: 34px; margin-top: 968px; }
  .faint { margin-top: 20px; opacity: 0.5; }

  /* Chat notification */
  .toast { position: absolute; left: 1846px; top: 1330px; display: flex; width: 700px; height: 160px; padding: 28px 0 0 16px; border-radius: 8px; background: #fff; box-shadow: 0 3px 4px #eceef1; }
  .face { width: 104px; height: 104px; }
  .message { display: flex; flex-direction: column; margin: 6px 0 0 16px; }
  .sender { font-size: 31px; line-height: 44px; font-weight: 600; color: #081c3d; letter-spacing: -0.2px; }
  .body { margin-top: 10px; font-size: 27px; line-height: 40px; color: #5a6a88; letter-spacing: -0.12px; }
  .dismiss { margin: -14px 14px 0 auto; color: #758398; }
  .dismiss svg { width: 20px; height: 20px; }

  /* Taskbar */
  .taskbar { position: relative; display: flex; height: 96px; flex: none; border-top: 2px solid #adb2ba; background: linear-gradient(90deg, #e2ecf6 0, #e0eaf4 11%, #d9dfe4 15%, #dbdddf 19%, #d5dae6 26%, #d4dae8 50%, #d6dae5 65%, #dadcdf 71%, #d9dde2 85%, #dbdee2 100%); color: #1b1b1b; }
  .weather { position: relative; width: 443px; padding: 24px 0 0 44px; }
  .weather svg { width: 46px; height: 46px; }
  .badge { position: absolute; left: 52px; top: 4px; display: grid; place-items: center; min-width: 32px; height: 32px; border-radius: 16px; background: #0078d4; color: #fff; font-size: 20px; line-height: 32px; }
  .badge.red { left: 62px; top: 12px; background: #c42b1c; }
  .badge.alert { background: #f90606; }
  .start { width: 46px; height: 46px; margin-top: 24px; }
  .search { display: flex; align-items: center; width: 437px; height: 64px; margin: 14px 0 0 28px; padding: 0 4px 0 20px; border: 2px solid #c6cad6; border-bottom-color: #a9adb8; border-radius: 32px; background: #f3f4f8; color: #5c5c5c; font-size: 26.500px; }
  .search span { padding-top: 1px; }
  .glass { width: 30px; height: 30px; margin-right: 20px; }
  .scene { width: 98px; height: 52px; margin-left: auto; }
  .apps { display: flex; gap: 12px; margin: 7px 0 0 12px; }
  .app { position: relative; width: 76px; height: 78px; padding: 15px 14px; border-radius: 8px; }
  .app.focused { background: #e9ecf4; box-shadow: 0 0 0 1px #d3d7e0, 0 1px 0 1px #bcc1cd; }
  .app-icon svg { width: 48px; height: 48px; }
  .app .badge { left: 39px; top: 5px; }
  .mark { position: absolute; left: 32px; bottom: 1px; width: 12px; height: 6px; border-radius: 3px; background: #777a82; }
  .mark.wide { left: 22px; width: 32px; background: #0078d4; }
  .tray { display: flex; align-items: center; width: 584px; margin-left: auto; padding-right: 38px; font-size: 23px; }
  .up { width: 22px; height: 12px; }
  .cloud { width: 34px; height: 24px; margin-left: 36px; }
  .loc { width: 30px; height: 32px; margin-left: 30px; }
  .lang { width: 46px; margin-left: 39px; }
  .wifi { width: 34px; height: 24px; margin-left: 37px; }
  .vol { width: 34px; height: 28px; margin-left: 15px; }
  .bat { width: 34px; height: 22px; margin-left: 14px; }
  .clock { display: flex; flex-direction: column; align-items: flex-end; margin: -4px 0 0 auto; line-height: 32px; letter-spacing: 0.2px; }

  .pma { font: italic 700 12px "Liberation Sans", sans-serif; fill: #3f3f74; }
  .zalo { font: 700 17px "Open Sans", sans-serif; fill: #0b62e0; }
</style>
